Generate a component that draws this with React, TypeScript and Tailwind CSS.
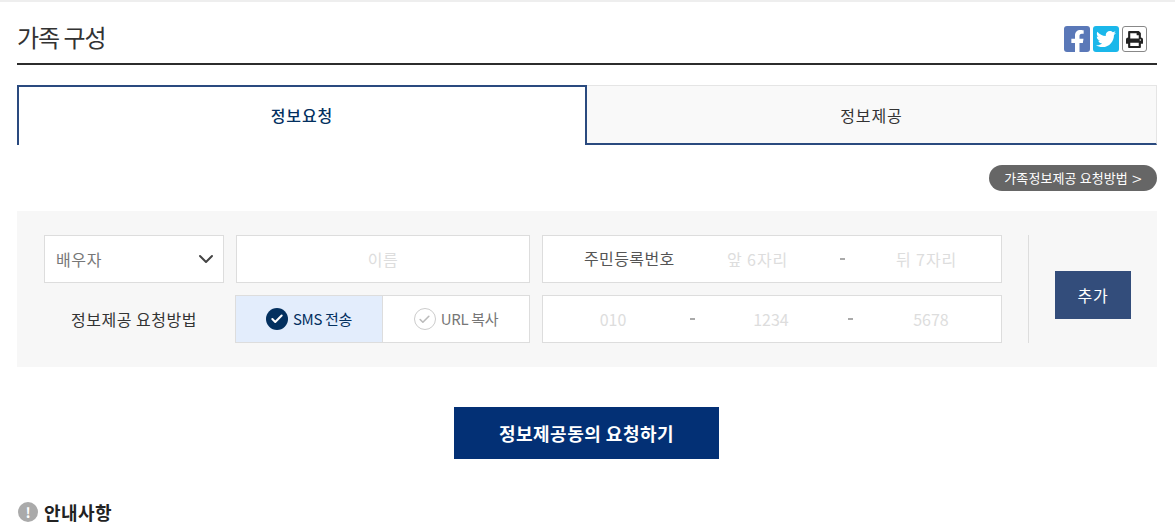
import { ChevronDown, Check } from "lucide-react";
import { FaFacebookF, FaTwitter, FaPrint } from "react-icons/fa";

const krFont = "font-['Noto_Sans_CJK_KR','Noto_Sans',sans-serif]";

function CheckCircle({ active }: { active: boolean }) {
  return active ? (
    <span className="flex h-[22px] w-[22px] items-center justify-center rounded-full bg-[#03305f]">
      <Check size={14} strokeWidth={3.5} className="text-white" />
    </span>
  ) : (
    <span className="flex h-[22px] w-[22px] items-center justify-center rounded-full border border-[#ccc] bg-white">
      <Check size={13} strokeWidth={3} className="text-[#bbb]" />
    </span>
  );
}

function Dash() {
  return <span className="block h-[2px] w-[5px] bg-[#aaa]" />;
}

export default function App() {
  return (
    <div className={`${krFont} h-[528px] w-[1175px] overflow-hidden border-t-2 border-[#eee] bg-white pl-[17px] text-[#333]`}>
      <div className="w-[1140px]">
        <div className="flex h-[63px] items-start justify-between border-b-2 border-[#2c2c2c]">
          <h1 className="mt-[17px] text-[24px] leading-[36px] font-normal tracking-[-1px] text-[#333]">가족 구성</h1>
          <div className="mt-[24px] flex gap-[3px] pr-[10px]">
            <span className="flex h-[26px] w-[26px] items-end justify-center overflow-hidden rounded-[3px] bg-[#5a78b8]">
              <FaFacebookF size={23} className="translate-y-[1px] text-white" />
            </span>
            <span className="flex h-[26px] w-[26px] items-center justify-center rounded-[3px] bg-[#1ab7ea]">
              <FaTwitter size={20} className="text-white" />
            </span>
            <span className="flex h-[26px] w-[25px] items-center justify-center rounded-[3px] border border-[#888] bg-white">
              <FaPrint size={17} className="text-[#222]" />
            </span>
          </div>
        </div>

        <div className="mt-[20px] flex h-[60px]">
          <div className="flex w-[570px] items-center justify-center border-x-2 border-t-2 border-[#2a4a7f] bg-white pb-[2px] text-[16px] font-medium tracking-[0.9px] text-[#03305f]">
            정보요청
          </div>
          <div className="flex w-[570px] items-center justify-center border-t border-r border-b-2 border-[#e5e5e5] border-b-[#2a4a7f] bg-[#f9f9f9] text-[16px] tracking-[0.9px] text-[#333]">
            정보제공
          </div>
        </div>

        <div className="mt-[20px] flex justify-end">
          <span className="flex h-[26px] w-[168px] items-center justify-center gap-[4px] rounded-[13px] bg-[#666] text-[13px] tracking-[0.1px] text-white">
            가족정보제공 요청방법 <span className="text-[18px] leading-none font-light">&gt;</span>
          </span>
        </div>

        <div className="mt-[20px] flex h-[156px] items-center bg-[#f7f7f7] pl-[27px]">
          <div className="flex w-[958px] flex-col gap-[12px]">
            <div className="flex h-[48px] gap-[12px]">
              <div className="flex w-[180px] items-center justify-between border border-[#ddd] bg-white pr-[5px] pl-[11px] text-[16px] tracking-[0.6px] text-[#777]">
                배우자
                <ChevronDown size={24} strokeWidth={2} className="text-[#444]" />
              </div>
              <div className="flex w-[294px] items-center justify-center border border-[#ddd] bg-white text-[16px] tracking-[0.5px] text-[#ddd]">
                이름
              </div>
              <div className="flex w-[460px] items-center border border-[#ddd] bg-white text-[16px]">
                <span className="ml-[41px] w-[100px] pb-[2px] tracking-[0.4px] text-[#555]">주민등록번호</span>
                <span className="ml-[43px] w-[62px] tracking-[0.9px] whitespace-nowrap text-[#ddd]">앞 6자리</span>
                <span className="ml-[51px]"><Dash /></span>
                <span className="ml-[51px] tracking-[0.9px] whitespace-nowrap text-[#ddd]">뒤 7자리</span>
              </div>
            </div>
            <div className="flex h-[48px] gap-[12px]">
              <div className="flex w-[180px] items-center justify-center text-[16px] tracking-[0.5px] text-[#333]">
                정보제공 요청방법
              </div>
              <div className="-ml-px flex w-[295px] border border-[#ddd] bg-white text-[15px] tracking-[-0.3px]">
                <div className="flex w-[147px] items-center justify-center gap-[5px] border-r border-[#ddd] bg-[#e3edfc] text-[#03305f]">
                  <CheckCircle active />
                  SMS 전송
                </div>
                <div className="flex flex-1 items-center justify-center gap-[5px] text-[#777]">
                  <CheckCircle active={false} />
                  URL 복사
                </div>
              </div>
              <div className="flex w-[460px] items-center border border-[#ddd] bg-white text-[16px] text-[#ddd]">
                <span className="ml-[50px] w-[40px] text-center">010</span>
                <span className="ml-[57px]"><Dash /></span>
                <span className="ml-[51px] w-[50px] text-center">1234</span>
                <span className="ml-[52px]"><Dash /></span>
                <span className="ml-[53px] w-[50px] text-center">5678</span>
              </div>
            </div>
          </div>
          <div className="ml-[26px] h-[108px] w-px bg-[#ddd]" />
          <button className="mt-[12px] ml-[26px] h-[48px] w-[76px] bg-[#334d7b] text-[16px] tracking-[0.8px] text-white">추가</button>
        </div>

        <div className="mt-[40px] flex justify-center pr-px">
          <button className="h-[52px] w-[265px] bg-[#033075] text-[18px] font-bold tracking-[0.5px] text-white">
            정보제공동의 요청하기
          </button>
        </div>

        <div className="mt-[40px] flex items-center gap-[6px] pl-[1px]">
          <span className="flex h-[20px] w-[20px] items-center justify-center rounded-full bg-[#aaa] text-[14px] font-bold text-white">!</span>
          <span className="text-[18px] leading-[26px] font-bold tracking-[0.4px] text-[#222]">안내사항</span>
        </div>
      </div>
    </div>
  );
}
